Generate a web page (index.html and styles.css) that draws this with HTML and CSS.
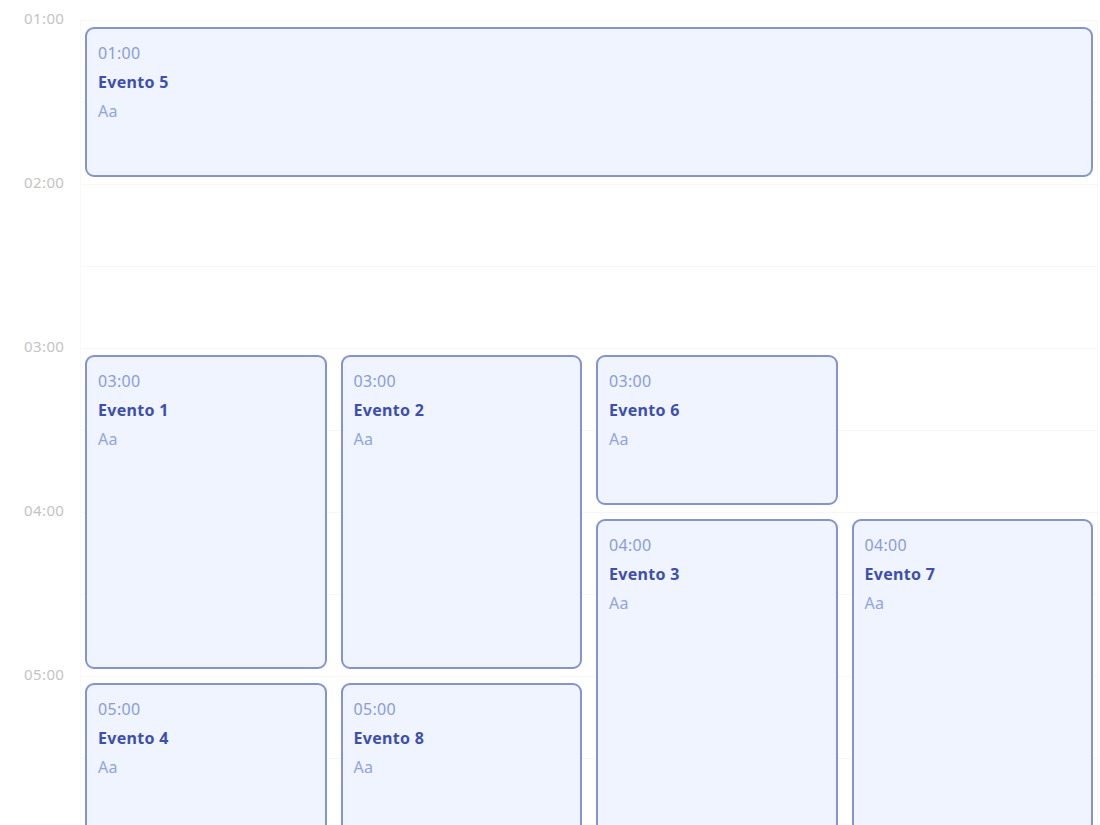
FILE: index.html
```html
<!DOCTYPE html>
<html lang="es">
<head>
    <meta charset="UTF-8">
    <meta name="viewport" content="width=device-width, initial-scale=1.0">
    <title>Agenda</title>
    <link rel="stylesheet" href="styles.css">
</head>
<body>
    <div class="day-view">
        <div class="hours">
            <span class="hour">01:00</span>
            <span class="hour">02:00</span>
            <span class="hour">03:00</span>
            <span class="hour">04:00</span>
            <span class="hour">05:00</span>
        </div>

        <div class="slots">
            <div class="event ev-5">
                <span class="event-time">01:00</span>
                <span class="event-title">Evento 5</span>
                <span class="event-note">Aa</span>
            </div>
            <div class="event ev-1">
                <span class="event-time">03:00</span>
                <span class="event-title">Evento 1</span>
                <span class="event-note">Aa</span>
            </div>
            <div class="event ev-2">
                <span class="event-time">03:00</span>
                <span class="event-title">Evento 2</span>
                <span class="event-note">Aa</span>
            </div>
            <div class="event ev-6">
                <span class="event-time">03:00</span>
                <span class="event-title">Evento 6</span>
                <span class="event-note">Aa</span>
            </div>
            <div class="event ev-3">
                <span class="event-time">04:00</span>
                <span class="event-title">Evento 3</span>
                <span class="event-note">Aa</span>
            </div>
            <div class="event ev-7">
                <span class="event-time">04:00</span>
                <span class="event-title">Evento 7</span>
                <span class="event-note">Aa</span>
            </div>
            <div class="event ev-4">
                <span class="event-time">05:00</span>
                <span class="event-title">Evento 4</span>
                <span class="event-note">Aa</span>
            </div>
            <div class="event ev-8">
                <span class="event-time">05:00</span>
                <span class="event-title">Evento 8</span>
                <span class="event-note">Aa</span>
            </div>
        </div>
    </div>
</body>
</html>
```

FILE: styles.css
```css
/* Basic Reset */
* {
    margin: 0;
    padding: 0;
    box-sizing: border-box;
}

body {
    font-family: "Noto Sans", "Open Sans", sans-serif;
    background-color: #fff;
    color: #333;
    overflow: hidden;
}

/* Day view: hour labels + slot grid */
.day-view {
    display: flex;
    padding-top: 20px;
}

.hours {
    width: 80px;
    flex-shrink: 0;
    display: flex;
    flex-direction: column;
    margin-top: -11px;
}

.hour {
    display: block;
    height: 164px;
    line-height: 18px;
    padding-left: 24px;
    font-size: 15px;
    letter-spacing: 0.4px;
    color: #c4c4c4;
}

/* one row per half hour, faint line at each slot */
.slots {
    flex: 1;
    margin-right: 2px;
    display: grid;
    grid-template-columns: repeat(4, 1fr);
    grid-template-rows: repeat(14, 82px);
    column-gap: 14px;
    padding: 0 4px;
    border-left: 1px solid #f9f9fb;
    border-right: 1px solid #f6f6f8;
    background-image: repeating-linear-gradient(
        to bottom,
        #f6f7f9 0,
        #f6f7f9 1px,
        transparent 1px,
        transparent 82px
    );
}

.event {
    margin: 7px 0;
    padding: 10px 11px;
    background-color: #eff4fe;
    border: 2px solid #8594cb;
    border-radius: 9px;
    display: flex;
    flex-direction: column;
    line-height: 29px;
    font-size: 16px;
    letter-spacing: 0.3px;
    overflow: hidden;
}

.event-time {
    color: #8b9cd9;
}

.event-title {
    font-weight: bold;
    color: #3e4fae;
}

.event-note {
    color: #91a4e2;
}

/* placement: rows are half hours from 01:00 */
.ev-5 { grid-column: 1 / 5; grid-row: 1 / 3; }
.ev-1 { grid-column: 1; grid-row: 5 / 9; }
.ev-2 { grid-column: 2; grid-row: 5 / 9; }
.ev-6 { grid-column: 3; grid-row: 5 / 7; }
.ev-3 { grid-column: 3; grid-row: 7 / 11; }
.ev-7 { grid-column: 4; grid-row: 7 / 11; }
.ev-4 { grid-column: 1; grid-row: 9 / 13; }
.ev-8 { grid-column: 2; grid-row: 9 / 13; }
```
